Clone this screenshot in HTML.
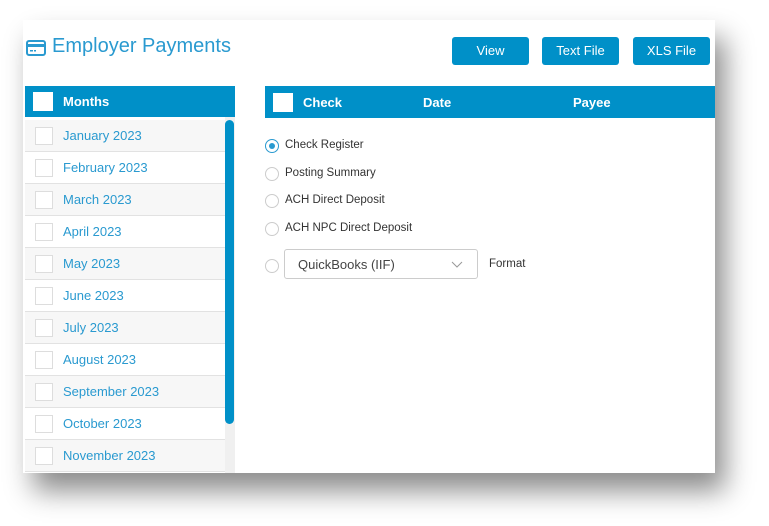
<!DOCTYPE html>
<html><head><style>
body{margin:0;width:769px;height:526px;background:#fff;position:relative;overflow:hidden;font-family:"Liberation Sans",sans-serif}
.panel{position:absolute;left:23px;top:20px;width:692px;height:453px;background:#fff;box-shadow:10px 18px 26px rgba(0,0,0,.45);overflow:hidden}
.title{position:absolute;left:28px;top:35px;color:#2a9ad0;font-size:20px}
.btn{position:absolute;top:37px;height:28px;background:#0090c8;color:#fff;font-size:13px;text-align:center;line-height:28px;border-radius:3px}
.hdr{position:absolute;background:#0090c8;color:#fff;font-weight:bold;font-size:13px}
.cb{position:absolute;width:18px;height:18px;background:#fff;border:1px solid #ddd;box-sizing:border-box}
.row{position:absolute;left:25px;width:200px;height:31px;border-bottom:1px solid #e2e2e2;background:#f7f7f7;color:#2a9ad0;font-size:13px}
.row span{position:absolute;left:38px;top:8px}
.row .cb{left:10px;top:7px}
.radio{position:absolute;left:265px;width:14px;height:14px;border:1px solid #ccc;border-radius:50%;box-sizing:border-box;background:#fff}
.lbl{position:absolute;left:285px;font-size:11.5px;color:#333}
</style></head><body>
<div class="panel"></div>
<svg style="position:absolute;left:26px;top:40px" width="20" height="16" viewBox="0 0 20 16"><rect x="1" y="1" width="18" height="14" rx="2" fill="none" stroke="#2a9ad0" stroke-width="2"/><rect x="1" y="4" width="18" height="3" fill="#2a9ad0"/><rect x="4" y="10" width="3" height="1.5" fill="#2a9ad0"/><rect x="8" y="10" width="2" height="1.5" fill="#2a9ad0"/></svg>
<div class="title" style="left:52px">Employer Payments</div>
<div class="btn" style="left:452px;width:77px">View</div>
<div class="btn" style="left:542px;width:77px">Text File</div>
<div class="btn" style="left:633px;width:77px">XLS File</div>
<div class="hdr" style="left:25px;top:86px;width:210px;height:31px"><div class="cb" style="left:8px;top:6px;width:20px;height:19px;border:none"></div><span style="position:absolute;left:38px;top:8px">Months</span></div>
<div style="position:absolute;left:225px;top:117px;width:10px;height:356px;background:#f0f0f0"></div>
<div style="position:absolute;left:225px;top:120px;width:9px;height:304px;background:#0090c8;border-radius:5px"></div>
<div class="row" style="top:120px"><div class="cb"></div><span>January 2023</span></div>
<div class="row" style="top:152px;background:#fff"><div class="cb"></div><span>February 2023</span></div>
<div class="row" style="top:184px"><div class="cb"></div><span>March 2023</span></div>
<div class="row" style="top:216px;background:#fff"><div class="cb"></div><span>April 2023</span></div>
<div class="row" style="top:248px"><div class="cb"></div><span>May 2023</span></div>
<div class="row" style="top:280px;background:#fff"><div class="cb"></div><span>June 2023</span></div>
<div class="row" style="top:312px"><div class="cb"></div><span>July 2023</span></div>
<div class="row" style="top:344px;background:#fff"><div class="cb"></div><span>August 2023</span></div>
<div class="row" style="top:376px"><div class="cb"></div><span>September 2023</span></div>
<div class="row" style="top:408px;background:#fff"><div class="cb"></div><span>October 2023</span></div>
<div class="row" style="top:440px"><div class="cb"></div><span>November 2023</span></div>
<div class="hdr" style="left:265px;top:86px;width:450px;height:32px"><div class="cb" style="left:8px;top:7px;width:20px;height:19px;border:none"></div><span style="position:absolute;left:38px;top:9px">Check</span><span style="position:absolute;left:158px;top:9px">Date</span><span style="position:absolute;left:308px;top:9px">Payee</span></div>
<div class="radio" style="top:139px;border-color:#2a9ad0"><div style="position:absolute;left:3px;top:3px;width:6px;height:6px;border-radius:50%;background:#2a9ad0"></div></div>
<div class="lbl" style="top:139px">Check Register</div>
<div class="radio" style="top:167px"></div><div class="lbl" style="top:167px">Posting Summary</div>
<div class="radio" style="top:194px"></div><div class="lbl" style="top:194px">ACH Direct Deposit</div>
<div class="radio" style="top:222px"></div><div class="lbl" style="top:222px">ACH NPC Direct Deposit</div>
<div class="radio" style="top:259px"></div>
<div style="position:absolute;left:284px;top:249px;width:194px;height:30px;border:1px solid #ccc;border-radius:3px;box-sizing:border-box;font-size:13px;color:#444"><span style="position:absolute;left:13px;top:7px">QuickBooks (IIF)</span>
<svg style="position:absolute;left:166px;top:11px" width="12" height="7"><path d="M1 1L6 6L11 1" fill="none" stroke="#999" stroke-width="1"/></svg></div>
<div class="lbl" style="left:489px;top:258px">Format</div>
</body></html>
